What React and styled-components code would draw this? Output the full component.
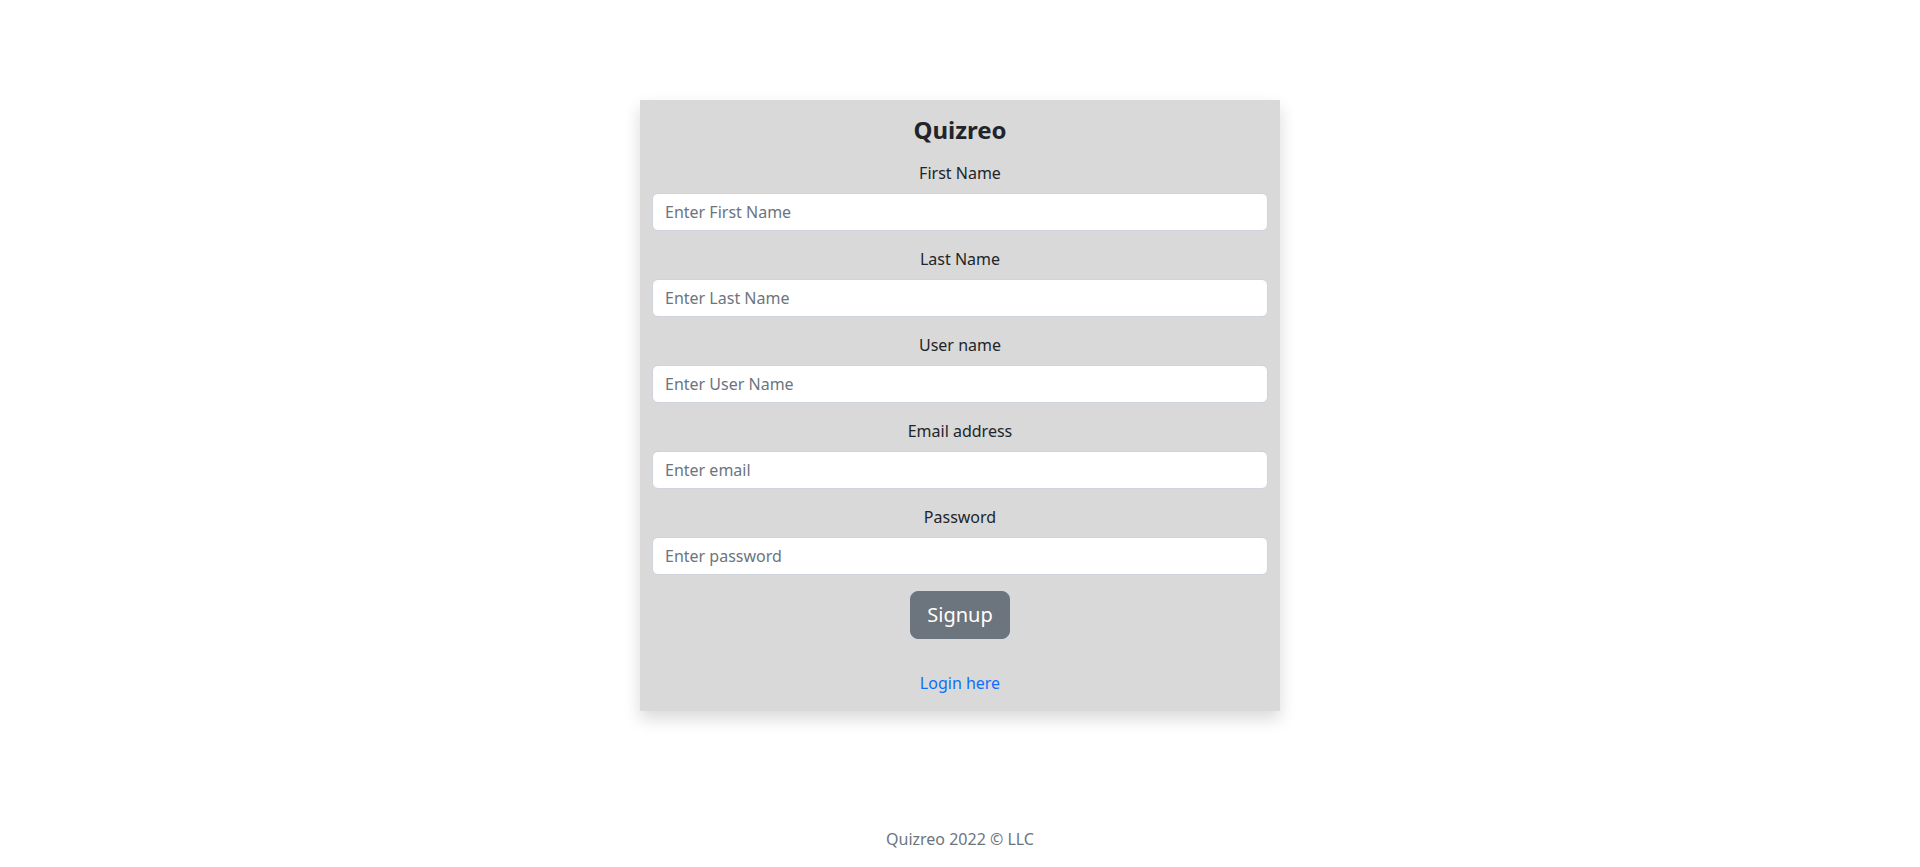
import React from "react";
import styled, { createGlobalStyle } from "styled-components";

const Global = createGlobalStyle`
  * { box-sizing: border-box; }
  html, body { margin: 0; padding: 0; }
  body {
    font-family: "Noto Sans", "Liberation Sans", sans-serif;
    font-size: 16px;
    line-height: 1.5;
    color: #212529;
    background: #fff;
  }
`;

const Page = styled.div`
  min-height: 867px;
  display: flex;
  flex-direction: column;
  align-items: center;
`;

const Main = styled.main`
  flex: 1;
  padding-top: 100px;
  display: flex;
  justify-content: center;
  align-items: flex-start;
  width: 100%;
`;

const Card = styled.form`
  width: 640px;
  background: #d9d9d9;
  box-shadow: 0 8px 16px rgba(0, 0, 0, 0.15);
  padding: 13px 12px 16px;
  display: flex;
  flex-direction: column;
`;

const Title = styled.h1`
  margin: 0 0 14px;
  font-size: 24px;
  line-height: 34px;
  font-weight: 700;
  text-align: center;
`;

const Field = styled.div`
  display: flex;
  flex-direction: column;
  margin-bottom: 16px;
`;

const Label = styled.label`
  text-align: center;
  margin-bottom: 8px;
  font-size: 16px;
  line-height: 24px;
`;

const Input = styled.input`
  display: block;
  width: 100%;
  height: 38px;
  padding: 6px 12px;
  font-family: inherit;
  font-size: 16px;
  line-height: 24px;
  color: #212529;
  background: #fff;
  border: 1px solid #ced4da;
  border-radius: 6px;
  outline: none;
  &::placeholder { color: #6c757d; }
`;

const ButtonRow = styled.div`
  display: flex;
  justify-content: center;
`;

const Button = styled.button`
  font-family: inherit;
  font-size: 20px;
  line-height: 30px;
  padding: 8px 16px;
  color: #fff;
  background: #6c757d;
  border: 1px solid #6c757d;
  border-radius: 8px;
  cursor: pointer;
`;

const LoginText = styled.p`
  margin: 32px 0 0;
  text-align: center;
  line-height: 24px;
`;

const Link = styled.a`
  color: #0d6efd;
  text-decoration: none;
`;

const Footer = styled.footer`
  padding-bottom: 16px;
  color: #6c757d;
  text-align: center;
  line-height: 24px;
`;

const fields = [
  { id: "first", label: "First Name", placeholder: "Enter First Name", type: "text" },
  { id: "last", label: "Last Name", placeholder: "Enter Last Name", type: "text" },
  { id: "user", label: "User name", placeholder: "Enter User Name", type: "text" },
  { id: "email", label: "Email address", placeholder: "Enter email", type: "email" },
  { id: "pass", label: "Password", placeholder: "Enter password", type: "password" },
];

export default function App() {
  return (
    <Page>
      <Global />
      <Main>
        <Card onSubmit={(e) => e.preventDefault()}>
          <Title>Quizreo</Title>
          {fields.map((f) => (
            <Field key={f.id}>
              <Label htmlFor={f.id}>{f.label}</Label>
              <Input id={f.id} type={f.type} placeholder={f.placeholder} />
            </Field>
          ))}
          <ButtonRow>
            <Button type="submit">Signup</Button>
          </ButtonRow>
          <LoginText>
            <Link href="#">Login here</Link>
          </LoginText>
        </Card>
      </Main>
      <Footer>Quizreo 2022 © LLC</Footer>
    </Page>
  );
}
